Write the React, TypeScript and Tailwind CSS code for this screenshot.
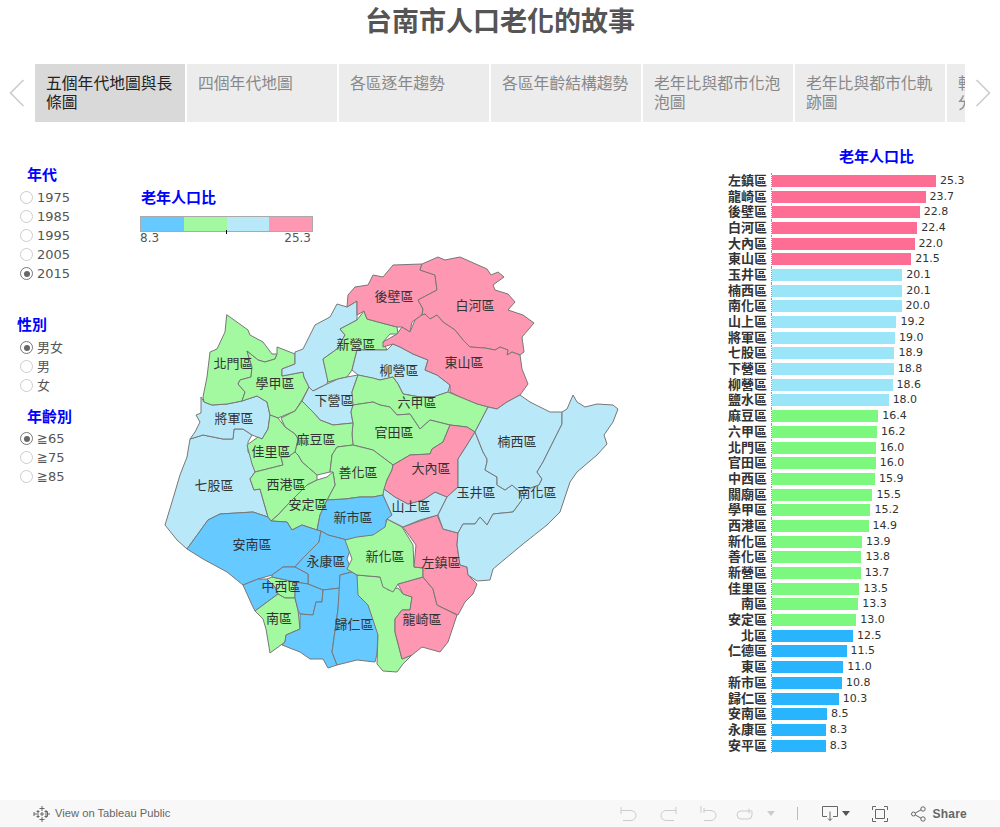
const tabs = [
  "五個年代地圖與長條圖",
  "四個年代地圖",
  "各區逐年趨勢",
  "各區年齡結構趨勢",
  "老年比與都市化泡泡圖",
  "老年比與都市化軌跡圖",
  "軌跡與都市化老年分布圖",
];

const filters = [
  { title: "年代", titleClass: "ml-[27px] mt-[44px]", listClass: "mt-[4px]", options: ["1975", "1985", "1995", "2005", "2015"], selected: "2015" },
  { title: "性別", titleClass: "ml-[17px] mt-[33px]", listClass: "mt-[4px]", options: ["男女", "男", "女"], selected: "男女" },
  { title: "年齡別", titleClass: "ml-[27px] mt-[13px]", listClass: "mt-[3px]", options: ["≧65", "≧75", "≧85"], selected: "≧65" },
];

const PINK = "#fe97b2";
const LIGHT = "#b9e9f9";
const GREEN = "#a3f9a0";
const BLUE = "#66c9ff";

// page coordinates, traced by hand
const regions = [
  { c: LIGHT, p: "190,437 203,433 223,437 233,437 234,427 243,427 252,433 248,440 248,450 255,458 255,470 250,477 254,488 260,487 268,515 253,510 220,512 208,518 187,547 177,538 165,523 172,500 180,473 187,455" },
  { c: LIGHT, p: "204,400 212,403 227,402 242,399 257,394 267,400 270,413 268,427 262,437 252,433 243,427 234,427 233,437 223,437 203,433 190,437 195,430 200,420 196,413 201,411 201,395" },
  { c: GREEN, p: "226.7,312.7 248,328 250,333 263,340 272,352 277,352 275,357 265,360 258,358 247,349 252,365 251,375 240,378 238,382 245,390 242,399 227,402 212,403 204,400 203,395 207,375 210,350 217,347 225,330" },
  { c: GREEN, p: "277,345 295,352 295,362 282,367 282,374 303,370 304,375 309,385 302,398 295,409 278,416 270,413 267,400 257,394 242,399 245,390 238,382 240,378 251,375 252,365 247,349 258,358 265,360 275,357 277,352" },
  { c: LIGHT, p: "282,374 282,367 295,362 295,350 303,347 315,323 330,315 337,302 347,305 357,299 357,318 340,327 345,333 337,347 323,357 328,378 327,382 313,389 309,385 304,375 303,370" },
  { c: GREEN, p: "357,318 364,309 367,317 378,320 397,325 398,332 390,332 383,340 387,348 357,348 352,368 347,375 338,377 328,380 323,357 337,347 345,333 340,327" },
  { c: LIGHT, p: "302,399 309,385 313,389 327,382 338,377 347,375 358,373 352,390 353,403 351,410 353,421 333,423 320,418 313,410" },
  { c: LIGHT, p: "387,348 393,342 400,345 413,352 428,358 425,368 437,373 450,383 448,390 433,395 420,395 403,392 398,382 393,375 380,378 358,373 352,368 357,348" },
  { c: PINK, p: "348,293 355,285 368,283 373,273 383,275 393,263 422,262 420,268 435,273 437,288 418,298 423,307 422,313 412,320 410,330 402,325 397,325 378,320 367,317 364,309 357,313 357,299 347,305" },
  { c: PINK, p: "422,262 438,255 445,258 460,255 487,267 491,273 498,270 504,275 493,283 495,288 508,292 515,300 508,308 523,313 534,321 522,335 524,350 520,353 512,350 507,353 508,348 500,345 495,348 485,346 470,345 463,338 455,328 443,320 437,313 430,317 425,312 422,313 423,307 418,298 437,288 435,273 420,268" },
  { c: PINK, p: "422,313 425,312 430,317 437,313 443,320 455,328 463,338 470,345 485,346 495,348 500,345 508,348 507,353 512,350 520,353 522,367 528,382 520,393 507,400 497,407 488,405 477,402 460,395 450,390 450,383 437,373 425,368 428,358 413,352 400,345 393,342 383,345 383,340 397,332 402,325 410,330 415,318" },
  { c: GREEN, p: "358,373 373,376 380,378 393,375 398,382 403,392 420,395 433,395 448,390 460,395 477,402 488,405 475,430 467,425 450,423 430,418 420,427 410,412 397,413 390,405 380,403 373,400 353,403 352,390" },
  { c: GREEN, p: "351,410 353,403 373,400 380,403 390,405 397,413 410,412 420,427 430,418 450,423 443,440 432,447 430,452 410,453 393,463 373,448 353,443 352,432 353,421" },
  { c: GREEN, p: "302,399 313,410 320,418 333,423 353,421 352,432 353,443 337,445 332,453 330,470 317,473 302,460 298,453 295,450 298,437 295,432 285,425 281,416 295,409" },
  { c: GREEN, p: "262,437 268,427 270,413 278,416 285,425 295,432 298,437 295,450 288,455 281,455 283,463 255,470 252,462 247,443 258,435" },
  { c: GREEN, p: "255,470 283,463 281,455 288,455 295,450 298,453 302,460 317,473 317,478 307,483 290,500 278,513 271,519 268,515 260,487 254,488 250,477" },
  { c: GREEN, p: "337,445 353,443 373,448 393,463 392,468 387,478 383,493 373,495 360,495 345,497 327,498 335,483 333,470 330,470 332,453" },
  { c: GREEN, p: "317,478 327,475 333,470 335,483 327,498 320,513 317,528 302,523 292,528 287,520 271,519 278,513 290,500 307,483" },
  { c: BLUE, p: "327,498 345,497 360,495 373,495 383,493 392,513 386,518 387,528 373,535 360,535 347,538 328,533 321,529 317,528 320,513" },
  { c: BLUE, p: "187,547 208,518 220,512 253,510 268,515 271,519 287,520 292,528 302,523 317,528 321,529 319,540 302,557 295,565 283,565 272,573 258,577 243,583 227,570 203,557" },
  { c: BLUE, p: "321,529 328,533 347,538 350,548 347,557 352,570 340,573 340,586 323,588 308,582 308,572 295,565 302,557 319,540" },
  { c: BLUE, p: "243,583 258,577 267,577 275,585 278,592 255,609 252,603" },
  { c: GREEN, p: "267,577 272,575 295,580 295,596 285,596 278,592 275,585" },
  { c: GREEN, p: "255,609 278,592 285,596 295,596 298,608 300,627 286,633 285,640 270,651 266,627 263,617" },
  { c: BLUE, p: "272,573 283,565 295,565 308,572 308,582 295,580 272,575" },
  { c: BLUE, p: "295,580 308,582 323,588 322,600 316,600 313,613 300,612 298,608 295,596" },
  { c: BLUE, p: "300,612 313,613 316,600 322,600 323,588 340,586 338,607 332,650 337,663 328,666 323,657 310,657 300,650 282,643 285,640 286,633 300,627" },
  { c: BLUE, p: "340,573 352,570 357,573 360,590 373,607 378,630 377,652 375,660 357,658 337,663 332,650 338,607" },
  { c: GREEN, p: "357,573 380,575 388,588 398,586 403,592 412,595 410,608 402,608 395,617 395,630 402,657 412,653 403,662 397,670 383,669 377,662 378,633 368,603 358,593" },
  { c: PINK, p: "398,582 423,575 433,587 437,603 457,613 448,640 440,650 422,645 412,653 402,657 395,630 395,617 402,608 410,608 412,595 403,592" },
  { c: GREEN, p: "387,517 402,525 413,543 414,565 423,566 423,575 398,582 393,590 383,585 380,575 357,573 347,567 352,557 345,538 357,535 373,533 385,525" },
  { c: PINK, p: "403,525 437,513 443,527 458,531 457,543 460,563 467,565 468,573 477,582 473,592 465,600 458,613 437,603 433,587 423,575 423,566 414,565 416,543" },
  { c: LIGHT, p: "384,487 395,495 408,502 423,498 435,490 447,495 438,513 420,518 403,525 387,517 392,513 383,493" },
  { c: PINK, p: "450,423 467,425 475,430 467,443 458,457 458,473 458,485 447,495 435,490 423,498 408,502 395,495 384,487 387,478 392,468 393,463 410,453 430,452 432,447 443,440" },
  { c: LIGHT, p: "475,430 467,443 458,457 458,473 458,485 447,495 438,513 443,527 458,531 463,522 475,522 480,515 487,523 493,512 513,510 522,498 520,490 512,483 505,488 497,483 497,475 485,468 487,460 487,457 483,450" },
  { c: LIGHT, p: "488,405 497,407 507,400 520,393 530,400 540,405 550,410 562,410 562,422 553,440 543,460 537,470 542,477 539,483 520,490 512,483 505,488 497,483 497,475 485,468 487,460 487,457 483,450 475,430" },
  { c: LIGHT, p: "562,410 567,407 573,393 577,400 585,405 597,402 613,403 618,407 613,420 604,433 607,442 597,453 577,470 570,480 560,510 547,523 523,542 493,567 490,578 477,579 468,573 467,565 460,563 457,543 458,531 463,522 475,522 480,515 487,523 493,512 513,510 522,498 520,490 539,483 542,477 537,470 543,460 553,440 562,422" },
];

const mapLabels: [string, number, number][] = [
  ["後壁區", 394, 294], ["白河區", 475, 303], ["新營區", 356, 342], ["柳營區", 399, 368],
  ["東山區", 464, 360], ["北門區", 233, 361], ["學甲區", 275, 381], ["下營區", 334, 398],
  ["六甲區", 417, 400], ["將軍區", 234, 416], ["官田區", 394, 430], ["麻豆區", 316, 437],
  ["佳里區", 271, 449], ["楠西區", 517, 439], ["大內區", 431, 466], ["善化區", 358, 470],
  ["西港區", 286, 482], ["七股區", 214, 483], ["玉井區", 476, 490], ["南化區", 537, 490],
  ["安定區", 308, 502], ["山上區", 411, 504], ["新市區", 353, 515], ["安南區", 252, 542],
  ["永康區", 326, 559], ["新化區", 385, 554], ["左鎮區", 441, 560], ["中西區", 281, 584],
  ["南區", 279, 616], ["歸仁區", 354, 622], ["龍崎區", 422, 617],
];

const bars: [string, number, string][] = [
  ["左鎮區", 25.3, "bg-[#fe6e94]"], ["龍崎區", 23.7, "bg-[#fe6e94]"], ["後壁區", 22.8, "bg-[#fe6e94]"],
  ["白河區", 22.4, "bg-[#fe6e94]"], ["大內區", 22.0, "bg-[#fe6e94]"], ["東山區", 21.5, "bg-[#fe6e94]"],
  ["玉井區", 20.1, "bg-[#9ae5f7]"], ["楠西區", 20.1, "bg-[#9ae5f7]"], ["南化區", 20.0, "bg-[#9ae5f7]"],
  ["山上區", 19.2, "bg-[#9ae5f7]"], ["將軍區", 19.0, "bg-[#9ae5f7]"], ["七股區", 18.9, "bg-[#9ae5f7]"],
  ["下營區", 18.8, "bg-[#9ae5f7]"], ["柳營區", 18.6, "bg-[#9ae5f7]"], ["鹽水區", 18.0, "bg-[#9ae5f7]"],
  ["麻豆區", 16.4, "bg-[#7cf87e]"], ["六甲區", 16.2, "bg-[#7cf87e]"], ["北門區", 16.0, "bg-[#7cf87e]"],
  ["官田區", 16.0, "bg-[#7cf87e]"], ["中西區", 15.9, "bg-[#7cf87e]"], ["關廟區", 15.5, "bg-[#7cf87e]"],
  ["學甲區", 15.2, "bg-[#7cf87e]"], ["西港區", 14.9, "bg-[#7cf87e]"], ["新化區", 13.9, "bg-[#7cf87e]"],
  ["善化區", 13.8, "bg-[#7cf87e]"], ["新營區", 13.7, "bg-[#7cf87e]"], ["佳里區", 13.5, "bg-[#7cf87e]"],
  ["南區", 13.3, "bg-[#7cf87e]"], ["安定區", 13.0, "bg-[#7cf87e]"], ["北區", 12.5, "bg-[#28b5fe]"],
  ["仁德區", 11.5, "bg-[#28b5fe]"], ["東區", 11.0, "bg-[#28b5fe]"], ["新市區", 10.8, "bg-[#28b5fe]"],
  ["歸仁區", 10.3, "bg-[#28b5fe]"], ["安南區", 8.5, "bg-[#28b5fe]"], ["永康區", 8.3, "bg-[#28b5fe]"],
  ["安平區", 8.3, "bg-[#28b5fe]"],
];

function Radio({ on }: { on: boolean }) {
  return (
    <span className={"flex h-[13px] w-[13px] items-center justify-center rounded-full border bg-white " + (on ? "border-[#777]" : "border-[#ccc]")}>
      {on && <span className="h-[6px] w-[6px] rounded-full bg-[#666]" />}
    </span>
  );
}

function TableauLogo() {
  return (
    <svg width="18" height="18" viewBox="0 0 18 18" stroke="#666" fill="none" strokeWidth="1">
      <path d="M9 1v5M6.5 3.5h5M9 12v5M6.5 14.5h5M1 9h5M1 7v4M12 9h5M14.5 6.5v5M5 5v3M3.5 6.5h3M13 5v3M11.5 6.5h3M5 10v3M3.5 11.5h3M13 10v3M11.5 11.5h3M9 7v4M7 9h4" />
    </svg>
  );
}

function Chevron({ flip }: { flip?: boolean }) {
  return (
    <svg width="16" height="28" viewBox="0 0 16 28" fill="none" stroke="#ccc" strokeWidth="1.6">
      <path d={flip ? "M1.5 1l13 13-13 13" : "M14.5 1l-13 13 13 13"} />
    </svg>
  );
}

export default function App() {
  return (
    <div className="flex h-[827px] w-[1000px] flex-col overflow-hidden bg-white font-['DejaVu_Sans','Noto_Sans_CJK_TC',sans-serif]">
      <h1 className="h-[64px] pt-[4px] text-center font-['Liberation_Sans','Noto_Sans_CJK_TC',sans-serif] text-[27px] font-bold leading-[36px] text-[#555]">
        台南市人口老化的故事
      </h1>

      <div className="flex h-[58px] items-center">
        <div className="ml-[9px] w-[26px] shrink-0">
          <Chevron />
        </div>
        <div className="flex h-[58px] w-[930px] gap-[2px] overflow-hidden">
          {tabs.map((t, i) => (
            <div
              key={t}
              className={"h-[58px] w-[150px] shrink-0 pl-[11px] pr-[10px] pt-[9px] font-['Noto_Sans_CJK_TC',sans-serif] text-[15.8px] leading-[19px] " + (i === 0 ? "bg-[#d9d9d9] text-[#222]" : "bg-[#ececec] text-[#888]")}
            >
              {t}
            </div>
          ))}
        </div>
        <div className="ml-[10px] shrink-0">
          <Chevron flip />
        </div>
      </div>

      <div className="flex flex-1">
        <div className="w-[140px] shrink-0">
          {filters.map((f) => (
            <div key={f.title}>
              <div className={"text-[15px] font-bold leading-[18px] text-[#0000ff] " + f.titleClass}>{f.title}</div>
              <div className={"flex flex-col " + f.listClass}>
                {f.options.map((o) => (
                  <div key={o} className="flex h-[19px] items-center gap-[4px] pl-[20px] text-[13px] text-[#555]">
                    <Radio on={o === f.selected} />
                    <span>{o}</span>
                  </div>
                ))}
              </div>
            </div>
          ))}
        </div>

        <div className="w-[490px] shrink-0">
          <div className="ml-[1px] mt-[67px] text-[15px] font-bold leading-[18px] text-[#0000ff]">老年人口比</div>
          <div className="relative mt-[9px] flex h-[16px] w-[173px] border border-[#aaa]">
            <div className="flex-1 bg-[#66c9ff]" />
            <div className="flex-1 bg-[#a3f9a0]" />
            <div className="flex-1 bg-[#b9e9f9]" />
            <div className="flex-1 bg-[#fe97b2]" />
            <span className="absolute left-[85px] top-[13px] h-[4px] w-px bg-black" />
          </div>
          <div className="flex w-[171px] justify-between text-[12px] leading-[13px] text-[#555]">
            <span>8.3</span>
            <span>25.3</span>
          </div>
          <svg className="ml-[20px] mt-[7px]" width="470" height="425" viewBox="160 250 470 425">
            {regions.map((r, i) => (
              <polygon key={i} points={r.p} fill={r.c} stroke="#777" strokeWidth="1" strokeLinejoin="round" />
            ))}
            {mapLabels.map(([name, x, y]) => (
              <text key={name} x={x} y={y} textAnchor="middle" dominantBaseline="central" fontSize="13" fill="#333">
                {name}
              </text>
            ))}
          </svg>
        </div>

        <div className="w-[370px] shrink-0">
          <div className="ml-[209px] mt-[27px] text-[15px] font-bold leading-[16px] text-[#0000ff]">老年人口比</div>
          <div className="mt-[8px] flex flex-col">
            {bars.map(([name, value, color]) => (
              <div key={name} className="flex h-[15.69px] items-center">
                <div className="w-[141px] pr-[4px] text-right text-[13px] font-bold leading-[12px] text-[#333]">{name}</div>
                <div className="flex h-full items-center border-l border-dotted border-[#999]">
                  <div className={"h-[12px] " + color} style={{ width: value * 6.48 }} />
                  <span className="ml-[4px] text-[11px] leading-[12px] text-[#333]">{value.toFixed(1)}</span>
                </div>
              </div>
            ))}
          </div>
        </div>
      </div>

      <div className="flex h-[27px] shrink-0 items-center bg-[#f8f8f8] pl-[33px] pr-[33px] font-['Liberation_Sans',sans-serif] text-[11.2px] text-[#666]">
        <TableauLogo />
        <span className="ml-[4px]">View on Tableau Public</span>
        <div className="ml-auto flex items-center">
          <svg width="17" height="17" viewBox="0 0 17 17" fill="none" stroke="#ccc">
            <path d="M1 5.5h10a5 5 0 0 1 0 10H3M1 2v7" />
          </svg>
          <svg className="ml-[23px]" width="17" height="17" viewBox="0 0 17 17" fill="none" stroke="#ccc">
            <path d="M16 5.5H6a5 5 0 0 0 0 10h8M16 2v7" />
          </svg>
          <svg className="ml-[23px]" width="17" height="17" viewBox="0 0 17 17" fill="none" stroke="#ccc">
            <path d="M1 1v7M4 5.5h7a5 5 0 0 1 0 10H4M4 3v5" />
          </svg>
          <svg className="ml-[19px]" width="17" height="12" viewBox="0 0 17 12" fill="none" stroke="#ccc">
            <path d="M16 3H5a4 4 0 0 0 0 8h7a4 4 0 0 0 4-4V3M13 .5v5" />
          </svg>
          <span className="ml-[14px] h-0 w-0 border-x-[4px] border-t-[5px] border-x-transparent border-t-[#ccc]" />
          <span className="ml-[22px] h-[13px] w-px bg-[#bbb]" />
          <svg className="ml-[24px]" width="16" height="17" viewBox="0 0 16 17" fill="none" stroke="#666">
            <path d="M5 11.5H.5v-10h15v10H11M8 6.5v9M6 13.5l2 2 2-2" />
          </svg>
          <span className="ml-[4px] h-0 w-0 border-x-[4px] border-t-[5px] border-x-transparent border-t-[#555]" />
          <svg className="ml-[22px]" width="16" height="16" viewBox="0 0 16 16" fill="none" stroke="#666">
            <path d="M.5 4V.5H4M12 .5h3.5V4M15.5 12v3.5H12M4 15.5H.5V12M3.5 3.5h9v9h-9z" />
          </svg>
          <svg className="ml-[23px]" width="15" height="16" viewBox="0 0 15 16" fill="none" stroke="#666">
            <circle cx="2.5" cy="8" r="2" />
            <circle cx="12" cy="3" r="2.2" />
            <circle cx="12" cy="13" r="2.2" />
            <path d="M4.3 7l5.8-3.2M4.3 9l5.8 3.2" />
          </svg>
          <span className="ml-[6px] text-[12px] font-bold tracking-[0.25px] text-[#666]">Share</span>
        </div>
      </div>
    </div>
  );
}
